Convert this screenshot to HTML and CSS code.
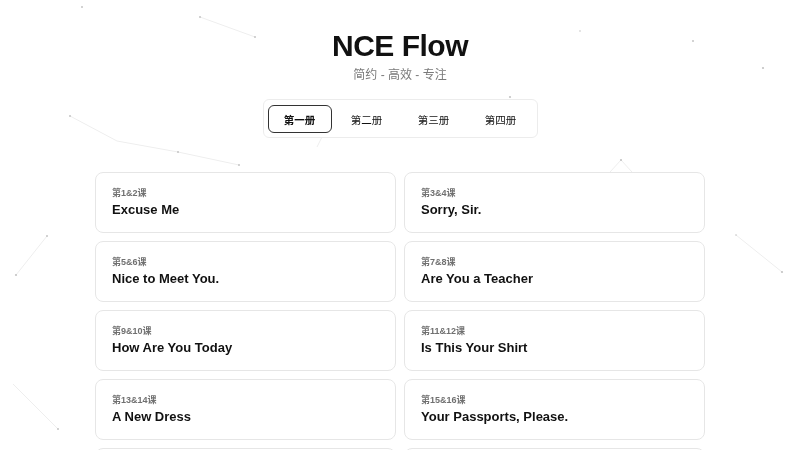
FILE: index.html
```html
<!DOCTYPE html>
<html lang="zh-CN">
<head>
<meta charset="utf-8">
<title>NCE Flow</title>
<link rel="stylesheet" href="styles.css">
</head>
<body>
<svg class="particles" width="800" height="450" viewBox="0 0 800 450" aria-hidden="true">
  <g class="links">
    <line x1="200" y1="17" x2="255" y2="37"/>
    <polyline points="70,116 117,141 178,152 239,165"/>
    <line x1="47" y1="236" x2="16" y2="275"/>
    <line x1="13" y1="384" x2="58" y2="429"/>
    <line x1="736" y1="235" x2="782" y2="272"/>
    <line x1="325" y1="131" x2="317" y2="147"/>
    <line x1="621" y1="160" x2="610" y2="172"/>
    <line x1="621" y1="160" x2="632" y2="172"/>
  </g>
  <g class="dots">
    <circle cx="82" cy="7" r="1"/>
    <circle cx="200" cy="17" r="1"/>
    <circle cx="255" cy="37" r="1"/>
    <circle cx="70" cy="116" r="1"/>
    <circle cx="178" cy="152" r="1"/>
    <circle cx="239" cy="165" r="1"/>
    <circle cx="580" cy="31" r="0.8"/>
    <circle cx="693" cy="41" r="1"/>
    <circle cx="763" cy="68" r="1.1"/>
    <circle cx="510" cy="97" r="1.1"/>
    <circle cx="621" cy="160" r="1.1"/>
    <circle cx="47" cy="236" r="1"/>
    <circle cx="16" cy="275" r="1.1"/>
    <circle cx="58" cy="429" r="1"/>
    <circle cx="736" cy="235" r="0.8"/>
    <circle cx="782" cy="272" r="1.1"/>
  </g>
</svg>

<main class="page">
  <header class="header">
    <h1 class="title">NCE Flow</h1>
    <p class="subtitle">简约 - 高效 - 专注</p>
    <nav class="tabs">
      <button class="tab active">第一册</button>
      <button class="tab">第二册</button>
      <button class="tab">第三册</button>
      <button class="tab">第四册</button>
    </nav>
  </header>

  <section class="grid">
    <a class="card"><span class="num">第1&amp;2课</span><span class="name">Excuse Me</span></a>
    <a class="card"><span class="num">第3&amp;4课</span><span class="name">Sorry, Sir.</span></a>
    <a class="card"><span class="num">第5&amp;6课</span><span class="name">Nice to Meet You.</span></a>
    <a class="card"><span class="num">第7&amp;8课</span><span class="name">Are You a Teacher</span></a>
    <a class="card"><span class="num">第9&amp;10课</span><span class="name">How Are You Today</span></a>
    <a class="card"><span class="num">第11&amp;12课</span><span class="name">Is This Your Shirt</span></a>
    <a class="card"><span class="num">第13&amp;14课</span><span class="name">A New Dress</span></a>
    <a class="card"><span class="num">第15&amp;16课</span><span class="name">Your Passports, Please.</span></a>
    <a class="card"><span class="num">第17&amp;18课</span><span class="name">How Do You Do?</span></a>
    <a class="card"><span class="num">第19&amp;20课</span><span class="name">Tired and Thirsty</span></a>
  </section>
</main>
</body>
</html>
```

FILE: styles.css
```css
* {
  box-sizing: border-box;
}

html, body {
  margin: 0;
  padding: 0;
  background: #ffffff;
}

body {
  font-family: "Liberation Sans", Arial, "Noto Sans CJK SC", sans-serif;
  color: #111111;
  overflow: hidden;
  height: 450px;
}

.particles {
  position: fixed;
  left: 0;
  top: 0;
  z-index: 0;
  pointer-events: none;
}

.links line,
.links polyline {
  stroke: #eeeeee;
  stroke-width: 1;
  fill: none;
}

.dots circle {
  fill: #c4c4c4;
}

.page {
  position: relative;
  z-index: 1;
  width: 610px;
  margin: 0 auto;
  padding-top: 28px;
}

.header {
  display: flex;
  flex-direction: column;
  align-items: center;
}

.title {
  margin: 0;
  font-size: 30px;
  line-height: 36px;
  font-weight: 700;
  letter-spacing: -0.5px;
  color: #111111;
}

.subtitle {
  margin: 2px 0 0;
  font-size: 12px;
  line-height: 18px;
  color: #7a7a7a;
  font-family: "Liberation Sans", "Noto Sans CJK SC", sans-serif;
  font-weight: 400;
}

.tabs {
  margin-top: 15px;
  display: flex;
  gap: 3px;
  padding: 5px 4px 4px;
  border: 1px solid #ececec;
  border-radius: 6px;
  background: #ffffff;
}

.tab {
  width: 64px;
  height: 28px;
  border: 1px solid transparent;
  border-radius: 6px;
  background: transparent;
  font-family: "Noto Sans CJK SC", sans-serif;
  font-size: 10.5px;
  color: #111111;
  padding: 0;
}

.tab.active {
  border-color: #333333;
  font-weight: 700;
  background: #ffffff;
}

.grid {
  margin-top: 34px;
  display: grid;
  grid-template-columns: 1fr 1fr;
  gap: 8px;
}

.card {
  display: flex;
  flex-direction: column;
  height: 61px;
  padding: 15px 16px 14px;
  border: 1px solid #e6e6e6;
  border-radius: 8px;
  background: #ffffff;
}

.num {
  font-size: 9px;
  line-height: 11px;
  color: #707070;
  font-weight: 700;
}

.name {
  margin-top: 3px;
  font-size: 13px;
  line-height: 16px;
  font-weight: 700;
  color: #111111;
}
```
